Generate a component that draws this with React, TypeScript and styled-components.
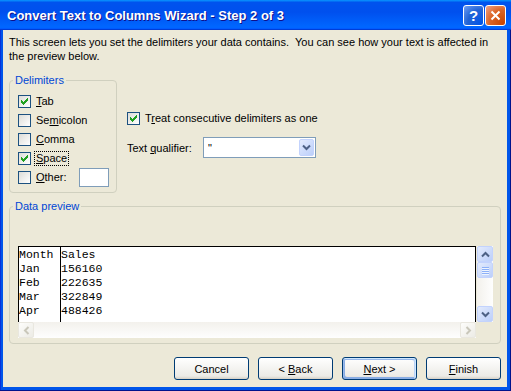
import React from "react";
import styled, { createGlobalStyle, css } from "styled-components";

const GlobalStyle = createGlobalStyle`
  html, body {
    margin: 0;
    padding: 0;
    background: #ece9d8;
  }
`;

const Frame = styled.div`
  width: 511px;
  height: 391px;
  box-sizing: border-box;
  display: flex;
  flex-direction: column;
  background: #0055ea;
  box-shadow: inset -1px -1px #00138c, inset 1px 0 #0831d9;
  font-family: "Liberation Sans", Arial, sans-serif;
  font-size: 11px;
  color: #000;
  overflow: hidden;
`;

const TitleBar = styled.div`
  height: 30px;
  flex: none;
  display: flex;
  align-items: center;
  padding: 0 5px 0 7px;
  box-sizing: border-box;
  background: linear-gradient(
    180deg,
    #0997ff,
    #0053ee 8%,
    #0050ee 40%,
    #0066ff 88%,
    #0066ff 93%,
    #005bff 95%,
    #003dd7 96%,
    #003dd7
  );
`;

const Title = styled.div`
  flex: 1;
  color: #fff;
  font-weight: bold;
  font-size: 13px;
  text-shadow: 1px 1px #0f1089;
`;

const TitleButton = styled.div<{ $close?: boolean }>`
  width: 21px;
  height: 21px;
  box-sizing: border-box;
  border: 1px solid #fff;
  border-radius: 3px;
  margin-left: 1px;
  display: flex;
  align-items: center;
  justify-content: center;
  color: #fff;
  font-weight: bold;
  font-size: 15px;
  ${(p) =>
    p.$close
      ? css`
          background: radial-gradient(circle at 90% 90%, #cc4600 0%, #dc6527 55%, #f0a48a 100%);
        `
      : css`
          background: radial-gradient(circle at 90% 90%, #0054e9 0%, #2263d5 55%, #70a0f5 100%);
        `}
`;

const Body = styled.div`
  flex: 1;
  margin: 0 4px 4px 3px;
  background: #ece9d8;
  padding: 5px 6px 0 6px;
  display: flex;
  flex-direction: column;
`;

const Intro = styled.p`
  margin: 0;
  line-height: 14px;
`;

const OptionsRow = styled.div`
  display: flex;
  gap: 10px;
  margin-top: 11px;
`;

const Group = styled.fieldset<{ $width?: string; $padTop: number; $gapTop?: number }>`
  margin: ${(p) => p.$gapTop ?? 0}px 0 0 0;
  min-width: 0;
  box-sizing: border-box;
  width: ${(p) => p.$width ?? "auto"};
  border: 1px solid #d0d0bf;
  border-radius: 4px;
  padding: ${(p) => p.$padTop}px 7px 5px 8px;
`;

const Legend = styled.legend`
  color: #0046d5;
  line-height: 13px;
  padding: 0 2px;
  margin-left: -5px;
`;

const CheckRow = styled.div`
  display: flex;
  align-items: center;
  height: 19px;
  gap: 4px;
`;

const Box = styled.span`
  width: 13px;
  height: 13px;
  flex: none;
  box-sizing: border-box;
  border: 1px solid #1c5180;
  background: linear-gradient(135deg, #dcdcd7, #fff);
  display: flex;
  align-items: center;
  justify-content: center;
`;

const Label = styled.span<{ $focused?: boolean }>`
  white-space: nowrap;
  line-height: 13px;
  padding: 0 1px;
  outline: ${(p) => (p.$focused ? "1px dotted #000" : "none")};
`;

const Accel = styled.span`
  text-decoration: underline;
  text-underline-offset: 1px;
`;

const OtherInput = styled.div`
  width: 30px;
  height: 19px;
  flex: none;
  box-sizing: border-box;
  border: 1px solid #7f9db9;
  background: #fff;
  margin-left: auto;
`;

const RightColumn = styled.div`
  padding-top: 35px;
  display: flex;
  flex-direction: column;
  gap: 9px;
`;

const QualifierRow = styled.div`
  display: flex;
  align-items: center;
`;

const QualifierLabel = styled.span`
  width: 76px;
`;

const Combo = styled.div`
  width: 113px;
  height: 21px;
  box-sizing: border-box;
  border: 1px solid #7f9db9;
  background: #fff;
  display: flex;
  align-items: center;
  padding: 1px;
`;

const ComboValue = styled.span`
  flex: 1;
  padding-left: 3px;
  color: #000;
`;

const ArrowButton = styled.div<{ $disabled?: boolean; $w?: number; $h?: number }>`
  width: ${(p) => p.$w ?? 16}px;
  height: ${(p) => p.$h ?? 16}px;
  flex: none;
  box-sizing: border-box;
  border-radius: 2px;
  display: flex;
  align-items: center;
  justify-content: center;
  ${(p) =>
    p.$disabled
      ? css`
          border: 1px solid #e9e7df;
          background: linear-gradient(135deg, #fdfdfb, #ecebe5);
        `
      : css`
          border: 1px solid #c3d3fd;
          background: linear-gradient(135deg, #e3ebfd, #bccffa);
        `}
`;

const Thumb = styled(ArrowButton)`
  flex-direction: column;
  gap: 1px;
`;

const Grip = styled.span`
  width: 7px;
  height: 1px;
  background: #8cb0f8;
  box-shadow: 0 1px #eef4fe;
`;

const PreviewFrame = styled.div`
  display: grid;
  grid-template-columns: 1fr 16px;
  grid-template-rows: 76px 16px;
  column-gap: 1px;
`;

const DataArea = styled.div`
  background: #fff;
  border: 1px solid #000;
  border-bottom: none;
  display: flex;
  overflow: hidden;
  font-family: "Liberation Mono", "Courier New", monospace;
  font-size: 11.5px;
  line-height: 14px;
`;

const DataColumn = styled.div<{ $width?: number }>`
  display: flex;
  flex-direction: column;
  padding-top: 1px;
  ${(p) =>
    p.$width
      ? css`
          width: ${p.$width}px;
          flex: none;
          border-right: 1px solid #000;
        `
      : css`
          flex: 1;
        `}
`;

const VScroll = styled.div`
  display: flex;
  flex-direction: column;
  background: linear-gradient(90deg, #f3f1ec, #fefefe);
`;

const HScroll = styled.div`
  display: flex;
  justify-content: space-between;
  align-items: center;
  background: linear-gradient(180deg, #f3f1ec, #fefefe);
`;

const Track = styled.div`
  flex: 1;
`;

const ButtonRow = styled.div`
  display: flex;
  justify-content: flex-end;
  gap: 9px;
  margin-top: 13px;
`;

const Button = styled.div<{ $default?: boolean }>`
  width: 75px;
  height: 23px;
  box-sizing: border-box;
  border: 1px solid #003c74;
  border-radius: 3px;
  background: linear-gradient(180deg, #fff, #ecebe6 86%, #d6d0c5);
  display: flex;
  align-items: center;
  justify-content: center;
  ${(p) =>
    p.$default &&
    css`
      box-shadow: inset -1px 1px #cee7ff, inset 1px 2px #98b8ea,
        inset -2px 2px #bcd4f6, inset 1px -1px #89ade4,
        inset 2px -2px #89ade4;
    `}
`;

type Dir = "up" | "down" | "left" | "right";

const Chevron = ({ dir, color }: { dir: Dir; color: string }) => {
  const rot = { up: 0, right: 90, down: 180, left: 270 }[dir];
  return (
    <svg width="9" height="9" viewBox="0 0 9 9">
      <g transform={`rotate(${rot} 4.5 4.5)`}>
        <path d="M1 6.5 L4.5 3 L8 6.5" fill="none" stroke={color} strokeWidth="2" />
      </g>
    </svg>
  );
};

const Check = () => (
  <svg width="7" height="7" viewBox="0 0 7 7" shapeRendering="crispEdges">
    <path
      fill="#21a121"
      d="M6 0h1v1h-1z M5 1h2v1h-2z M0 2h1v1h-1z M4 2h3v1h-3z M0 3h2v1h-2z M3 3h3v1h-3z M0 4h5v1h-5z M1 5h3v1h-3z M2 6h1v1h-1z"
    />
  </svg>
);

const Checkbox = ({ checked }: { checked?: boolean }) => <Box>{checked && <Check />}</Box>;

interface Delimiter {
  before: string;
  key: string;
  after: string;
  checked: boolean;
  focused?: boolean;
}

const delimiters: Delimiter[] = [
  { before: "", key: "T", after: "ab", checked: true },
  { before: "Se", key: "m", after: "icolon", checked: false },
  { before: "", key: "C", after: "omma", checked: false },
  { before: "", key: "S", after: "pace", checked: true, focused: true },
];

const rows = [
  ["Month", "Sales"],
  ["Jan", "156160"],
  ["Feb", "222635"],
  ["Mar", "322849"],
  ["Apr", "488426"],
];

export default function App() {
  return (
    <>
      <GlobalStyle />
      <Frame>
        <TitleBar>
          <Title>Convert Text to Columns Wizard - Step 2 of 3</Title>
          <TitleButton>?</TitleButton>
          <TitleButton $close>
            <svg width="11" height="11" viewBox="0 0 11 11">
              <path d="M1.5 1.5 L9.5 9.5 M9.5 1.5 L1.5 9.5" stroke="#fff" strokeWidth="2" />
            </svg>
          </TitleButton>
        </TitleBar>
        <Body>
          <Intro>
            This screen lets you set the delimiters your data contains.&nbsp; You can see how your text is affected in
            the preview below.
          </Intro>
          <OptionsRow>
            <Group $width="108px" $padTop={5}>
              <Legend>Delimiters</Legend>
              {delimiters.map((d) => (
                <CheckRow key={d.key + d.after}>
                  <Checkbox checked={d.checked} />
                  <Label $focused={d.focused}>
                    {d.before}
                    <Accel>{d.key}</Accel>
                    {d.after}
                  </Label>
                </CheckRow>
              ))}
              <CheckRow>
                <Checkbox />
                <Label>
                  <Accel>O</Accel>ther:
                </Label>
                <OtherInput />
              </CheckRow>
            </Group>
            <RightColumn>
              <CheckRow>
                <Checkbox checked />
                <Label>
                  T<Accel>r</Accel>eat consecutive delimiters as one
                </Label>
              </CheckRow>
              <QualifierRow>
                <QualifierLabel>
                  Text <Accel>q</Accel>ualifier:
                </QualifierLabel>
                <Combo>
                  <ComboValue>"</ComboValue>
                  <ArrowButton $w={15} $h={17}>
                    <Chevron dir="down" color="#4d6185" />
                  </ArrowButton>
                </Combo>
              </QualifierRow>
            </RightColumn>
          </OptionsRow>
          <Group $padTop={33} $gapTop={7}>
            <Legend>Data preview</Legend>
            <PreviewFrame>
              <DataArea>
                <DataColumn $width={41}>
                  {rows.map((r) => (
                    <span key={r[0]}>{r[0]}</span>
                  ))}
                </DataColumn>
                <DataColumn>
                  {rows.map((r) => (
                    <span key={r[0]}>{r[1]}</span>
                  ))}
                </DataColumn>
              </DataArea>
              <VScroll>
                <ArrowButton>
                  <Chevron dir="up" color="#4d6185" />
                </ArrowButton>
                <Thumb>
                  <Grip />
                  <Grip />
                  <Grip />
                  <Grip />
                </Thumb>
                <Track />
                <ArrowButton>
                  <Chevron dir="down" color="#4d6185" />
                </ArrowButton>
              </VScroll>
              <HScroll>
                <ArrowButton $disabled>
                  <Chevron dir="left" color="#c9c7ba" />
                </ArrowButton>
                <ArrowButton $disabled>
                  <Chevron dir="right" color="#c9c7ba" />
                </ArrowButton>
              </HScroll>
            </PreviewFrame>
          </Group>
          <ButtonRow>
            <Button>Cancel</Button>
            <Button>
              &lt;&nbsp;<Accel>B</Accel>ack
            </Button>
            <Button $default>
              <Accel>N</Accel>ext &gt;
            </Button>
            <Button>
              <Accel>F</Accel>inish
            </Button>
          </ButtonRow>
        </Body>
      </Frame>
    </>
  );
}
